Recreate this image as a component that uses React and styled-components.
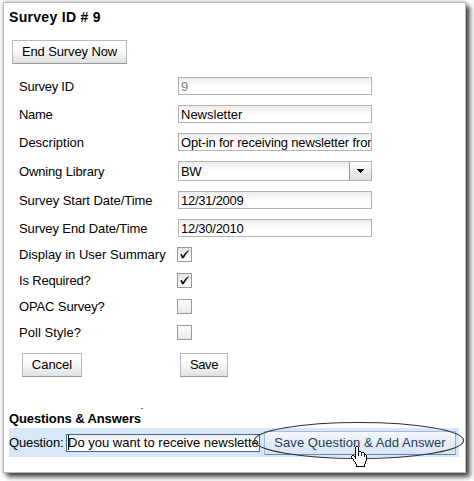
import React from "react";
import styled, { createGlobalStyle } from "styled-components";

const GlobalStyle = createGlobalStyle`
  * { box-sizing: border-box; }
  html, body { margin: 0; background: #fff; overflow: hidden; }
  body { font: 13px/15px "Liberation Sans", Arial, sans-serif; color: #000; }
`;

const Page = styled.div`
  height: 481px;
  padding: 2px 8px 8px 3px;
`;

const Panel = styled.main`
  position: relative;
  display: flex;
  flex-direction: column;
  height: 471px;
  border: 1px solid #b9b9b9;
  padding: 0 6px 0 5px;
  background: #fff;
  box-shadow: 4px 4px 5px 0 rgba(0, 0, 0, 0.7), 0 0 4px rgba(0, 0, 0, 0.3);
`;

const Text = styled.span`
  white-space: pre;
  letter-spacing: ${(p) => p.$tracking || 0}px;
`;

const Title = styled.h1`
  margin: 6px 0 0;
  height: 31px;
  font-size: 14px;
  line-height: 16px;
`;

const Button = styled.button`
  display: flex;
  align-items: center;
  justify-content: center;
  width: ${(p) => p.$width}px;
  height: 24px;
  padding: 0 0 1px;
  border: 1px solid #b8b8b8;
  border-bottom-color: #999;
  background: linear-gradient(#fff, #fafafa 45%, #dfdfdf);
  color: #000;
  font: inherit;
`;

const EndButton = styled(Button)`
  margin-left: 3px;
  flex: none;
`;

const Form = styled.form`
  margin: 8px 0 0 10px;
`;

const Row = styled.div`
  display: grid;
  grid-template-columns: 159px 194px;
  align-items: center;
  height: ${(p) => p.$height || 28}px;
`;

const CheckRow = styled.label`
  display: grid;
  grid-template-columns: 158px 15px;
  align-items: start;
  height: 26px;
  padding-top: 5px;
`;

const Field = styled.div`
  display: flex;
  align-items: center;
  width: 194px;
  height: 18px;
  padding: 1px 0 0 2px;
  overflow: hidden;
  border: 1px solid #b3b3b3;
  background: linear-gradient(#ececec, #fff 9px);
  color: ${(p) => (p.$disabled ? "#808080" : "#000")};
`;

const Select = styled(Field)`
  height: 20px;
  padding-top: 0;
  justify-content: space-between;
`;

const SelectArrow = styled.span`
  display: grid;
  place-items: center;
  width: 22px;
  height: 18px;
  border-left: 1px solid #999;
  background: linear-gradient(#fff, #dedede);
`;

const CheckBox = styled.span`
  display: grid;
  place-items: center;
  width: 15px;
  height: 15px;
  border: 1px solid #999;
  background: linear-gradient(#e3e3e3, #fff);
  ${(p) => !p.$checked && "background: linear-gradient(#fff, #e6e6e6);"}
`;

const Actions = styled.div`
  display: grid;
  grid-template-columns: 158px 48px;
  margin: 7px 0 0 3px;
`;

const SectionTitle = styled.h2`
  display: flex;
  margin: 34px 0 0;
  height: 17px;
  font-size: 13px;
  line-height: 15px;
`;

const Speck = styled.i`
  width: 2px;
  height: 1px;
  margin-top: -3px;
  background: #777;
`;

const QuestionBar = styled.div`
  display: flex;
  align-items: center;
  width: 450px;
  height: 29px;
  background: #d8e7f7;
`;

const QuestionLabel = styled.span`
  width: 57px;
`;

const QuestionField = styled(Field)`
  margin-right: 4px;
  padding: 0 0 1px 1px;
  border-color: #406b9b;
`;

const Caret = styled.i`
  flex: none;
  width: 1px;
  height: 15px;
  margin-right: -1px;
  background: #000;
`;

const AddButton = styled(Button)`
  border: 1px solid #9dbfe4;
  border-bottom: 1px solid #5e8dbd;
  border-right-color: #8cb2da;
  background: linear-gradient(#f5f9fd, #e5ecf4 50%, #d9e5f2);
  color: #243c5f;
`;

const Highlight = styled.svg`
  position: absolute;
  left: 249px;
  top: 418px;
  pointer-events: none;
`;

const Pointer = styled.svg`
  position: absolute;
  left: 347px;
  top: 443px;
  pointer-events: none;
`;

const fields = [
  { label: "Survey ID", gap: -0.25, value: "9", disabled: true },
  { label: "Name", gap: -0.3, value: "Newsletter" },
  { label: "Description", value: "Opt-in for receiving newsletter from us", valueGap: -0.15 },
  { label: "Owning Library", gap: -0.15, value: "BW", select: true, valueGap: -0.3 },
  { label: "Survey Start Date/Time", gap: -0.05, value: "12/31/2009", valueGap: -0.25 },
  { label: "Survey End Date/Time", gap: -0.1, value: "12/30/2010", valueGap: -0.25 },
];

const checks = [
  { label: "Display in User Summary", gap: 0, checked: true },
  { label: "Is Required?", gap: -0.17, checked: true },
  { label: "OPAC Survey?", gap: -0.13 },
  { label: "Poll Style?", gap: 0.05 },
];

function FormField({ field }) {
  const value = <Text $tracking={field.valueGap}>{field.value}</Text>;
  return (
    <Row $height={field.select ? 30 : 28}>
      <Text $tracking={field.gap}>{field.label}</Text>
      {field.select ? (
        <Select>
          {value}
          <SelectArrow>
            <svg width="7" height="4" viewBox="0 0 7 4" shapeRendering="crispEdges">
              <path d="M0 0h7v1H0zM1 1h5v1H1zM2 2h3v1H2zM3 3h1v1H3z" />
            </svg>
          </SelectArrow>
        </Select>
      ) : (
        <Field $disabled={field.disabled}>{value}</Field>
      )}
    </Row>
  );
}

export default function App() {
  return (
    <Page>
      <GlobalStyle />
      <Panel>
        <Title><Text $tracking={0.3}>Survey ID # 9</Text></Title>
        <EndButton $width={115}><Text $tracking={-0.12}>End Survey Now</Text></EndButton>
        <Form onSubmit={(e) => e.preventDefault()}>
          {fields.map((f) => <FormField key={f.label} field={f} />)}
          {checks.map((c) => (
            <CheckRow key={c.label}>
              <Text $tracking={c.gap}>{c.label}</Text>
              <CheckBox $checked={c.checked}>
                {c.checked && (
                  <svg width="11" height="11" viewBox="0 0 11 11">
                    <path d="M1.2 5.6L2.7 4.9L4 7.1Q6.1 3.3 9.2 1.2L9.9 1.8Q7 4.8 4.8 9.1L3.2 9.5Z" fill="#111" />
                  </svg>
                )}
              </CheckBox>
            </CheckRow>
          ))}
          <Actions>
            <Button $width={60}>Cancel</Button>
            <Button $width={48}><Text $tracking={-0.45}>Save</Text></Button>
          </Actions>
        </Form>
        <SectionTitle>
          <Text $tracking={-0.1}>Questions &amp; Answers</Text>
          <Speck />
        </SectionTitle>
        <QuestionBar>
          <QuestionLabel><Text $tracking={-0.12}>Question:</Text></QuestionLabel>
          <QuestionField>
            <Caret />
            <Text>Do you want to receive newsletters</Text>
          </QuestionField>
          <AddButton $width={192}><Text $tracking={0.06}>Save Question &amp; Add Answer</Text></AddButton>
        </QuestionBar>
        <Highlight width="212" height="40" viewBox="0 0 212 40">
          <ellipse cx="106" cy="19.5" rx="104.5" ry="18" fill="none" stroke="#303030" strokeWidth="1.1" />
        </Highlight>
        <Pointer width="17" height="22" viewBox="0 0 17 22" shapeRendering="crispEdges">
          <path
            d="M5 1h2v5h3v1h3v1h2v1h1v6h-1v3h-1v3H6v-2H5v-2H4v-2H3v-1H2v-2H1v-2h3v1h1z"
            fill="#fff"
          />
          <path d="M5 0h2v1h-2zM4 1h1v10h-1zM7 1h1v9h-1zM8 5h2v1h-2zM10 6h1v4h-1zM11 6h2v1h-2zM13 7h1v4h-1zM14 8h1v1h-1zM15 9h1v6h-1zM14 15h1v3h-1zM13 18h1v3h-1zM5 20h9v1h-9zM5 18h1v2h-1zM4 16h1v2h-1zM3 15h1v1h-1zM2 13h1v2h-1zM1 12h1v1h-1zM0 10h1v2h-1zM1 9h2v1h-2zM3 10h1v1h-1zM4 11h1v2h-1z" />
        </Pointer>
      </Panel>
    </Page>
  );
}
